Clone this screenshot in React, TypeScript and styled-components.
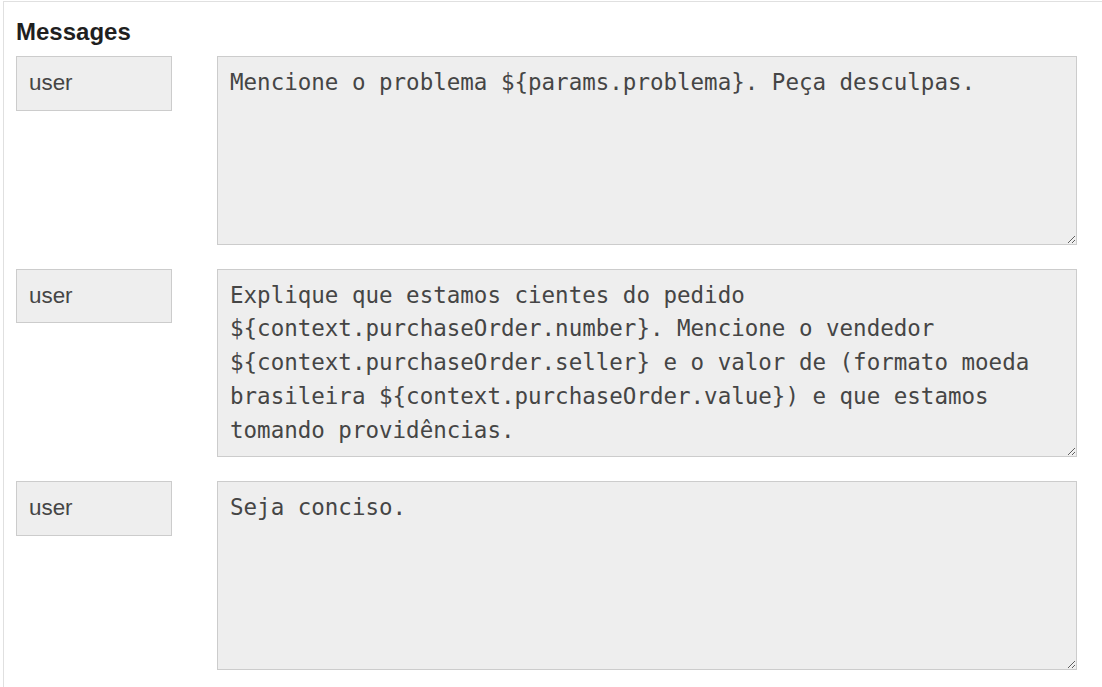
import React from "react";
import styled, { createGlobalStyle } from "styled-components";

const Global = createGlobalStyle`
  html, body { margin: 0; padding: 0; background: #fff; overflow: hidden; }
  body { font-family: "Liberation Sans", Arial, sans-serif; }
`;

const Panel = styled.section`
  margin: 1px 0 0 3px;
  width: 1200px;
  min-height: 760px;
  border: 1px solid #e0e0e0;
  padding: 16px 12px;
  box-sizing: border-box;
`;

const Title = styled.h2`
  margin: 0 0 10px;
  font-size: 24px;
  line-height: 28px;
  font-weight: bold;
  color: #1f1f1f;
`;

const List = styled.div`
  display: flex;
  flex-direction: column;
  gap: 24px;
`;

const Row = styled.div`
  display: grid;
  grid-template-columns: 156px 860px;
  column-gap: 45px;
  align-items: start;
`;

const Role = styled.div`
  height: 54.5px;
  box-sizing: border-box;
  border: 1px solid #cccccc;
  background: #eeeeee;
  padding: 0 12px;
  display: flex;
  align-items: center;
  font-size: 22.4px;
  color: #454545;
`;

const Content = styled.textarea`
  display: block;
  width: 860px;
  height: 188.5px;
  box-sizing: border-box;
  margin: 0;
  border: 1px solid #cccccc;
  border-radius: 0;
  background: #eeeeee;
  padding: 9px 12px 6px;
  font-family: "DejaVu Sans Mono", monospace;
  font-size: 22.5px;
  line-height: 33.75px;
  color: #454545;
  resize: vertical;
  outline: none;
`;

const messages = [
  { role: "user", text: "Mencione o problema ${params.problema}. Peça desculpas." },
  {
    role: "user",
    text:
      "Explique que estamos cientes do pedido ${context.purchaseOrder.number}. Mencione o vendedor ${context.purchaseOrder.seller} e o valor de (formato moeda brasileira ${context.purchaseOrder.value}) e que estamos tomando providências.",
  },
  { role: "user", text: "Seja conciso." },
];

export default function App() {
  return (
    <>
      <Global />
      <Panel>
        <Title>Messages</Title>
        <List>
          {messages.map((m, i) => (
            <Row key={i}>
              <Role>{m.role}</Role>
              <Content readOnly value={m.text} spellCheck={false} />
            </Row>
          ))}
        </List>
      </Panel>
    </>
  );
}
